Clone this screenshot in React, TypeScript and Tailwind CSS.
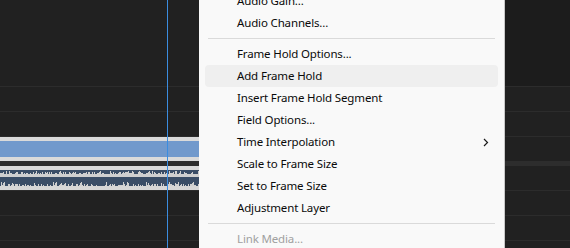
import React from "react";

function rand(seed: number) {
  let s = seed;
  return () => {
    s = (s * 1103515245 + 12345) % 2147483648;
    return s / 2147483648;
  };
}

function Waveform() {
  const r = rand(7);
  const bars1: React.ReactElement[] = [];
  const bars2: React.ReactElement[] = [];
  for (let x = 0; x < 240; x++) {
    const v = r();
    const h1 = v > 0.92 ? 3 : v > 0.75 ? 2 : v > 0.5 ? 1 : 0;
    if (h1) bars1.push(<rect key={"a" + x} x={x} y={8 - h1} width={1} height={h1} fill="#cfcfcf" />);
    const w = r();
    const h2 = w > 0.95 ? 4 : w > 0.85 ? 3 : w > 0.65 ? 2 : w > 0.45 ? 1 : 0;
    if (h2) bars2.push(<rect key={"b" + x} x={x} y={20 - h2} width={1} height={h2} fill="#cfcfcf" />);
  }
  return (
    <svg width="240" height="24" viewBox="0 0 240 24" className="block">
      <rect x="0" y="0" width="240" height="4" fill="#dadada" />
      <rect x="0" y="4" width="240" height="16" fill="#3a4d66" />
      <rect x="0" y="8" width="240" height="3" fill="#cfcfcf" />
      {bars1}
      <rect x="0" y="20" width="240" height="4" fill="#d6d6d6" />
      {bars2}
    </svg>
  );
}

const items: { label: string; hover?: boolean; sub?: boolean; disabled?: boolean; sep?: boolean }[] = [
  { label: "Audio Gain..." },
  { label: "Audio Channels..." },
  { label: "", sep: true },
  { label: "Frame Hold Options..." },
  { label: "Add Frame Hold", hover: true },
  { label: "Insert Frame Hold Segment" },
  { label: "Field Options..." },
  { label: "Time Interpolation", sub: true },
  { label: "Scale to Frame Size" },
  { label: "Set to Frame Size" },
  { label: "Adjustment Layer" },
  { label: "", sep: true },
  { label: "Link Media...", disabled: true },
];

export default function App() {
  return (
    <div className="relative w-[570px] h-[248px] overflow-hidden bg-[#212121]" style={{ fontFamily: '"Noto Sans", "Open Sans", sans-serif' }}>
      <div className="flex flex-col">
        <div className="flex h-[86px]">
          <div className="flex-1 bg-[#212121]" />
          <div className="w-[65px] bg-[#1c1c1c]" />
        </div>
        <div className="h-px bg-[#2c2c2c]" />
        <div className="h-[24px]" />
        <div className="h-px bg-[#2c2c2c]" />
        <div className="h-[24px]" />
        <div className="h-px bg-[#2c2c2c]" />
        <div className="h-[24px] flex">
          <div className="w-[240px] flex flex-col">
            <div className="h-[4px] bg-[#dadada]" />
            <div className="h-[16px] bg-[#7199cc]" />
            <div className="h-[4px] bg-[#dadada]" />
          </div>
        </div>
        <div className="h-[5px] bg-[#2d2d2d]" />
        <div className="h-[24px] flex">
          <Waveform />
        </div>
        <div className="h-px bg-[#2c2c2c]" />
        <div className="h-[24px]" />
        <div className="h-px bg-[#2c2c2c]" />
        <div className="h-[24px]" />
        <div className="h-px bg-[#2c2c2c]" />
      </div>

      <div className="absolute left-[167px] top-0 h-full w-px bg-[#3b8de0]" />

      <div className="absolute left-[199px] top-[-10px] w-[306px] h-[270px] bg-[#f9f9f9] border-r border-[#c8c8c8] px-[6px] text-[11.5px] tracking-[-0.15px] text-[#0a0a0a]">
        {items.map((it, i) =>
          it.sep ? (
            <div key={i} className="h-[9px] flex items-center px-[3px]">
              <div className="h-px w-full bg-[#dadada]" />
            </div>
          ) : (
            <div
              key={i}
              className={
                "h-[22px] flex items-center pl-[32px] pr-[9px] rounded-[4px] " +
                (it.hover ? "bg-[#efefef] " : "") +
                (it.disabled ? "text-[#a0a0a0]" : "")
              }
            >
              <span className="flex-1 whitespace-nowrap">{it.label}</span>
              {it.sub && (
                <svg width="6" height="9" viewBox="0 0 6 9" className="block">
                  <path d="M1 1 L4.5 4.5 L1 8" stroke="#1a1a1a" strokeWidth="1.2" fill="none" />
                </svg>
              )}
            </div>
          )
        )}
      </div>
    </div>
  );
}
